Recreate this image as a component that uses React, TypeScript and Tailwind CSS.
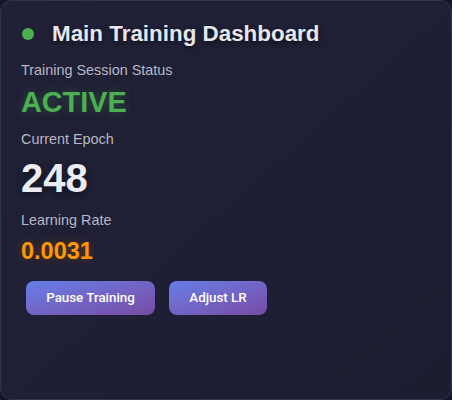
export default function App() {
  return (
    <div className="h-[400px] w-[452px] bg-[#15152a] font-['Liberation_Sans',Arial,sans-serif]">
      <div className="flex h-full flex-col rounded-[12px] border border-[#33334a] bg-[#1f1f35] bg-gradient-to-br from-[#202037] to-[#1d1d32] px-5 pt-[19px]">
        {/* header */}
        <div className="flex h-[28px] items-center">
          <span className="ml-px h-[12px] w-[12px] rounded-full bg-[#4caf50]" />
          <h1 className="ml-[18px] text-[22.4px] font-bold leading-[28px] text-[#e6e6ee] [text-shadow:0_2px_4px_rgba(0,0,0,0.5)]">
            Main Training Dashboard
          </h1>
        </div>

        <div className="mt-3 text-[14.4px] leading-[20px] text-[#b8b8c4]">Training Session Status</div>
        <div className="mt-[5px] text-[28.8px] font-bold leading-[34px] text-[#4caf50] [text-shadow:0_0_10px_rgba(76,175,80,0.35)]">
          ACTIVE
        </div>

        <div className="mt-[10px] text-[14.4px] leading-[20px] text-[#b8b8c4]">Current Epoch</div>
        <div className="mt-[6px] text-[40px] font-bold leading-[46px] text-[#ececf2] [text-shadow:0_2px_6px_rgba(0,0,0,0.45)]">
          248
        </div>

        <div className="mt-[9px] text-[14.4px] leading-[20px] text-[#b8b8c4]">Learning Rate</div>
        <div className="mt-[6px] text-[23.5px] font-bold leading-[30px] text-[#ff9800] [text-shadow:0_0_8px_rgba(255,152,0,0.3)]">
          0.0031
        </div>

        <div className="mt-[15px] ml-[5px] flex gap-[14px]">
          <button className="h-[34px] w-[129px] rounded-[8px] bg-gradient-to-br from-[#667eea] to-[#764ba2] font-['Roboto',sans-serif] text-[13.33px] font-medium text-white">
            Pause Training
          </button>
          <button className="h-[34px] w-[98px] rounded-[8px] bg-gradient-to-br from-[#667eea] to-[#764ba2] font-['Roboto',sans-serif] text-[13.33px] font-medium text-white">
            Adjust LR
          </button>
        </div>
      </div>
    </div>
  );
}
